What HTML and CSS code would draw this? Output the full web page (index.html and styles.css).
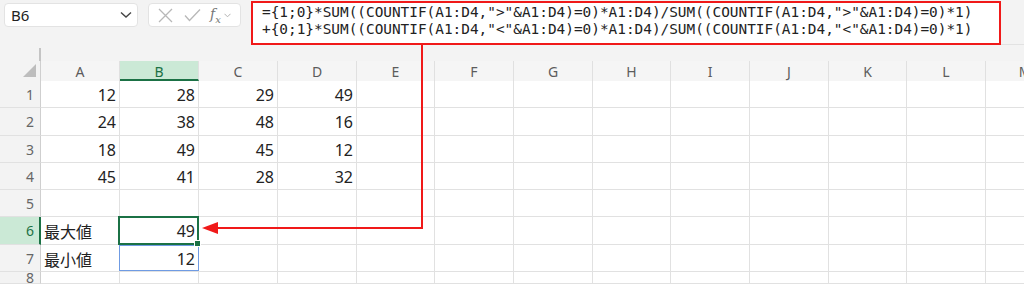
FILE: index.html
```html
<!DOCTYPE html>
<html lang="ja">
<head>
    <meta charset="UTF-8">
    <title>Excel - 最大値 / 最小値</title>
    <link rel="stylesheet" href="styles.css">
</head>
<body>
    <!-- formula bar -->
    <div class="toolbar">
        <div class="name-box">
            <span>B6</span>
            <svg width="12" height="8" viewBox="0 0 12 8"><path d="M1 1.5 L6 6 L11 1.5" fill="none" stroke="#444" stroke-width="1.4"/></svg>
        </div>
        <div class="fx-box">
            <svg width="15" height="15" viewBox="0 0 15 15"><path d="M1 1 L14 14 M14 1 L1 14" stroke="#b8b8b8" stroke-width="1.3"/></svg>
            <svg width="17" height="14" viewBox="0 0 17 14"><path d="M1 7.5 L5.5 12.5 L16 1.5" fill="none" stroke="#b8b8b8" stroke-width="1.3"/></svg>
            <span class="fx">f<sub>x</sub></span>
            <svg width="7" height="5" viewBox="0 0 7 5"><path d="M0.5 0.8 L3.5 3.8 L6.5 0.8" fill="none" stroke="#b3b3b3" stroke-width="1"/></svg>
        </div>
        <div class="formula">
            <div>={1;0}*SUM((COUNTIF(A1:D4,"&gt;"&amp;A1:D4)=0)*A1:D4)/SUM((COUNTIF(A1:D4,"&gt;"&amp;A1:D4)=0)*1)</div>
            <div>+{0;1}*SUM((COUNTIF(A1:D4,"&lt;"&amp;A1:D4)=0)*A1:D4)/SUM((COUNTIF(A1:D4,"&lt;"&amp;A1:D4)=0)*1)</div>
        </div>
        <div class="formula-rest"></div>
    </div>

    <div class="gap"><span class="stub"></span></div>

    <!-- sheet grid -->
    <div class="sheet">
        <div class="corner"><span class="tri"></span></div>
        <div class="col-h">A</div>
        <div class="col-h sel">B</div>
        <div class="col-h">C</div>
        <div class="col-h">D</div>
        <div class="col-h">E</div>
        <div class="col-h">F</div>
        <div class="col-h">G</div>
        <div class="col-h">H</div>
        <div class="col-h">I</div>
        <div class="col-h">J</div>
        <div class="col-h">K</div>
        <div class="col-h">L</div>
        <div class="col-h">M</div>

        <div class="row-h">1</div><div class="c num">12</div><div class="c num">28</div><div class="c num">29</div><div class="c num">49</div><div class="c"></div><div class="c"></div><div class="c"></div><div class="c"></div><div class="c"></div><div class="c"></div><div class="c"></div><div class="c"></div><div class="c"></div>
        <div class="row-h">2</div><div class="c num">24</div><div class="c num">38</div><div class="c num">48</div><div class="c num">16</div><div class="c"></div><div class="c"></div><div class="c"></div><div class="c"></div><div class="c"></div><div class="c"></div><div class="c"></div><div class="c"></div><div class="c"></div>
        <div class="row-h">3</div><div class="c num">18</div><div class="c num">49</div><div class="c num">45</div><div class="c num">12</div><div class="c"></div><div class="c"></div><div class="c"></div><div class="c"></div><div class="c"></div><div class="c"></div><div class="c"></div><div class="c"></div><div class="c"></div>
        <div class="row-h">4</div><div class="c num">45</div><div class="c num">41</div><div class="c num">28</div><div class="c num">32</div><div class="c"></div><div class="c"></div><div class="c"></div><div class="c"></div><div class="c"></div><div class="c"></div><div class="c"></div><div class="c"></div><div class="c"></div>
        <div class="row-h">5</div><div class="c"></div><div class="c"></div><div class="c"></div><div class="c"></div><div class="c"></div><div class="c"></div><div class="c"></div><div class="c"></div><div class="c"></div><div class="c"></div><div class="c"></div><div class="c"></div><div class="c"></div>
        <div class="row-h sel">6</div><div class="c">最大値</div><div class="c num active">49</div><div class="c"></div><div class="c"></div><div class="c"></div><div class="c"></div><div class="c"></div><div class="c"></div><div class="c"></div><div class="c"></div><div class="c"></div><div class="c"></div><div class="c"></div>
        <div class="row-h">7</div><div class="c">最小値</div><div class="c num ref">12</div><div class="c"></div><div class="c"></div><div class="c"></div><div class="c"></div><div class="c"></div><div class="c"></div><div class="c"></div><div class="c"></div><div class="c"></div><div class="c"></div><div class="c"></div>
        <div class="row-h">8</div><div class="c"></div><div class="c"></div><div class="c"></div><div class="c"></div><div class="c"></div><div class="c"></div><div class="c"></div><div class="c"></div><div class="c"></div><div class="c"></div><div class="c"></div><div class="c"></div><div class="c"></div>
    </div>

    <!-- red callout from formula box to B6 -->
    <svg class="callout" width="1024" height="284" viewBox="0 0 1024 284">
        <path d="M422 45 V228 H216" fill="none" stroke="#f01919" stroke-width="2"/>
        <polygon points="202,228 218,222 218,234" fill="#f01919"/>
    </svg>
</body>
</html>
```

FILE: styles.css
```css
/* page */
body {
    margin: 0;
    background: #f3f3f3;
    font-family: "Noto Sans", "Noto Sans CJK JP", sans-serif;
    position: relative;
    width: 1024px;
    height: 284px;
    overflow: hidden;
}

.toolbar {
    display: flex;
    align-items: flex-start;
    height: 47px;
    padding-top: 1px;
    box-sizing: border-box;
}

.name-box {
    margin: 2px 0 0 4px;
    width: 134px;
    height: 24px;
    box-sizing: border-box;
    background: #fff;
    border: 1px solid #e3e3e3;
    border-radius: 4px;
    display: flex;
    align-items: center;
    justify-content: space-between;
    padding: 0 5px 0 6px;
    font-size: 15px;
    color: #222;
}

.fx-box {
    margin: 2px 0 0 10px;
    width: 93px;
    height: 24px;
    box-sizing: border-box;
    background: #fff;
    border: 1px solid #e3e3e3;
    border-radius: 4px;
    display: flex;
    align-items: center;
    padding: 0 4px 0 9px;
    gap: 12px;
}

.fx-box svg:nth-child(2) {
    margin-left: -1px;
}

.fx {
    font-family: "DejaVu Serif", serif;
    font-style: italic;
    font-size: 14px;
    color: #777;
    margin-left: -3px;
    margin-right: -9px;
}

.fx sub {
    font-size: 10px;
}

.formula {
    margin-left: 10px;
    width: 750px;
    height: 44px;
    box-sizing: border-box;
    border: 2px solid #f01919;
    background: #fff;
    padding: 1px 0 0 9px;
    font-family: "DejaVu Sans Mono", monospace;
    font-size: 14.4px;
    line-height: 17px;
    color: #222;
    white-space: nowrap;
}

.formula-rest {
    flex: 1;
    height: 43px;
    border-bottom: 1px solid #e2e2e2;
}

.gap {
    height: 14px;
    position: relative;
}

.stub {
    position: absolute;
    left: 39px;
    top: 1px;
    width: 2px;
    height: 13px;
    background: #c4c4c4;
}

/* grid */
.sheet {
    display: grid;
    grid-template-columns: 41px 79px 79px 79px 79px 78px 79px 79px 78px 79px 79px 78px 79px 79px;
    grid-template-rows: 20px 27px 28px 27px 27px 27px 28px 27px 12px;
    width: 1106px;
}

.corner {
    background: #f3f3f3;
    border-right: 1px solid #cfcfcf;
    position: relative;
}

.tri {
    position: absolute;
    right: 4px;
    bottom: 4px;
    width: 0;
    height: 0;
    border-left: 13px solid transparent;
    border-bottom: 13px solid #bdbdbd;
}

.col-h {
    background: #f5f5f5;
    border-right: 1px solid #e0e0e0;
    display: flex;
    align-items: center;
    justify-content: center;
    font-size: 14px;
    color: #5c5c5c;
}

.col-h.sel {
    background: #cbe9d6;
    color: #1b7145;
    border-bottom: 2px solid #1b7145;
    box-sizing: border-box;
    padding-top: 2px;
}

.row-h {
    background: #f3f3f3;
    border-right: 1px solid #cfcfcf;
    border-bottom: 1px solid #e1e1e1;
    box-sizing: border-box;
    display: flex;
    align-items: center;
    justify-content: flex-end;
    padding-right: 6px;
    font-size: 14px;
    color: #666;
}

.row-h.sel {
    background: #cbe9d6;
    color: #1b7145;
    border-right: 2px solid #1b7145;
    padding-right: 5px;
}

.c {
    background: #fff;
    border-right: 1px solid #e1e1e1;
    border-bottom: 1px solid #e1e1e1;
    box-sizing: border-box;
    display: flex;
    align-items: center;
    padding: 1px 3px 0 3px;
    font-size: 16px;
    color: #222;
    position: relative;
}

.c.num {
    justify-content: flex-end;
}

/* active cell */
.c.active::after {
    content: "";
    position: absolute;
    left: -2px;
    top: -1px;
    right: -1px;
    bottom: -1px;
    border: 2px solid #1b7145;
}

.c.active::before {
    content: "";
    position: absolute;
    right: -3px;
    bottom: -3px;
    width: 5px;
    height: 5px;
    background: #1b7145;
    border: 1px solid #fff;
    z-index: 2;
}

.c.ref::after {
    content: "";
    position: absolute;
    left: -1px;
    top: 0;
    right: -1px;
    bottom: 0;
    border: 1px solid #6f9be3;
}

.callout {
    position: absolute;
    left: 0;
    top: 0;
    pointer-events: none;
}
```
